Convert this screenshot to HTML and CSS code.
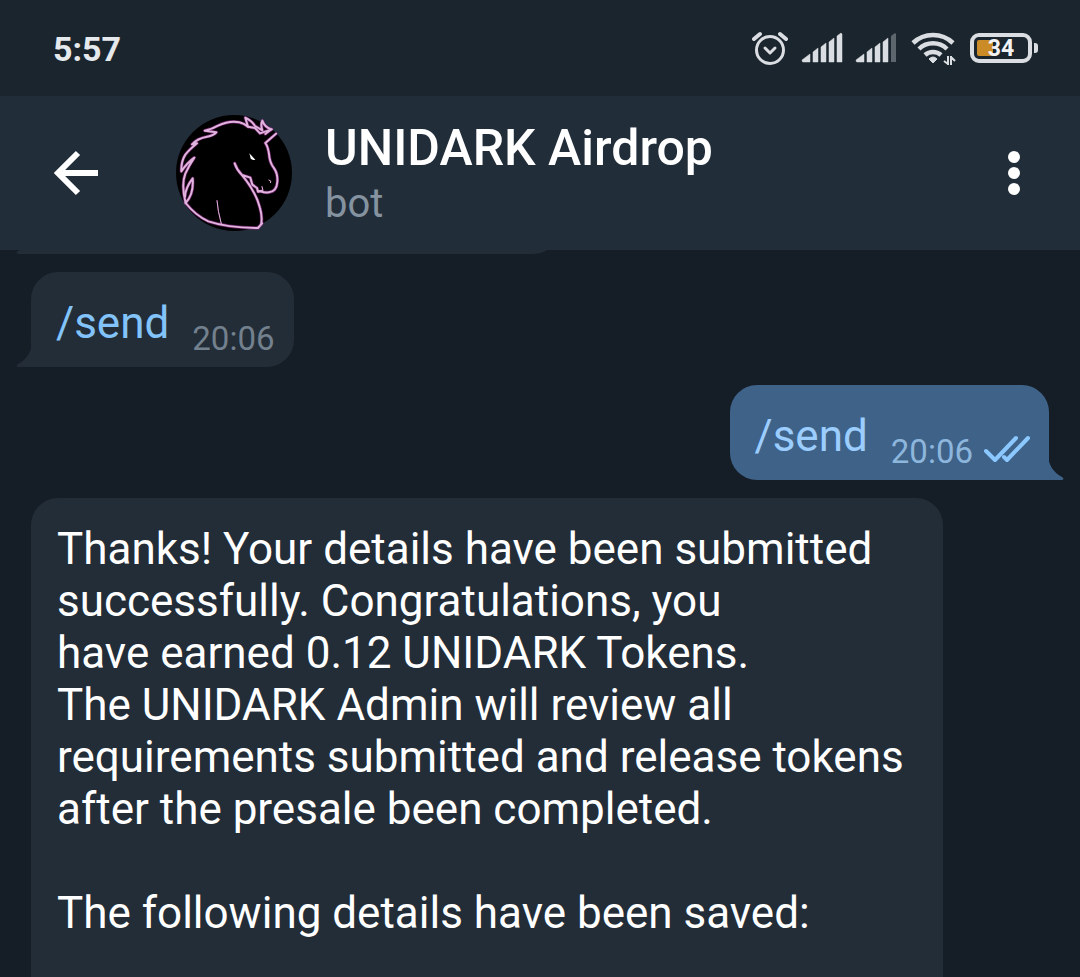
FILE: index.html
```html
<!DOCTYPE html>
<html lang="en">
<head>
    <meta charset="utf-8">
    <meta name="viewport" content="width=device-width, initial-scale=1">
    <title>UNIDARK Airdrop</title>
    <link rel="stylesheet" href="styles.css">
</head>
<body>
<div class="app">
    <div class="status-bar">
        <span class="clock">5:57</span>
        <div class="status-icons">
            <!-- alarm -->
            <svg width="36" height="36" viewBox="0 0 36 36" fill="none" stroke="currentColor" stroke-linecap="round">
                <circle cx="18" cy="20" r="13.500" stroke-width="3"/>
                <path d="M2 9 8 4M28 4l6 5" stroke-width="4"/>
                <path d="m13 18 5 5 5-5" stroke-width="3" stroke-linejoin="round"/>
            </svg>
            <!-- signal sim 1 -->
            <svg width="40" height="36" viewBox="0 0 40 36" fill="currentColor">
                <path d="M0 30l8-6v8H1q-1 0-1-2zM11 22l5-4v14h-5zM19 17l5-4v19h-5zM27 12l5-4v24h-5zM35 6l4-3 1 1v28h-5z" stroke="currentColor" stroke-width=".5"/>
            </svg>
            <!-- signal sim 2 -->
            <svg width="40" height="36" viewBox="0 0 40 36" fill="currentColor">
                <path d="M0 30l8-6v8H1q-1 0-1-2zM11 22l5-4v14h-5zM19 17l5-4v19h-5zM27 12l5-4v24h-5z" stroke="currentColor" stroke-width=".5"/>
                <path d="M35 6l4-3 1 1v28h-5z" opacity=".35"/>
            </svg>
            <!-- wifi -->
            <svg width="46" height="36" viewBox="0 0 46 36" fill="none" stroke="currentColor">
                <path d="M3 13a29 29 0 0 1 40 0M9 19a20 20 0 0 1 28 0M15 25a12 12 0 0 1 16 0" stroke-width="4.500"/>
                <path d="m23 33-4-4q4-4 8 0z" fill="currentColor" stroke-width="1" stroke-linejoin="round"/>
                <path d="M38 26v9M34 31l4 3M41 35v-9M41 27l4 4" stroke-width="2"/>
            </svg>
            <div class="battery">
                <div class="battery-body"><span class="battery-level"></span><span class="battery-text">34</span></div>
                <span class="battery-tip"></span>
            </div>
        </div>
    </div>

    <header class="header">
        <button class="btn back" type="button" aria-label="Back">
            <svg width="44" height="44" viewBox="0 0 44 44" fill="none" stroke="currentColor" stroke-width="6">
                <path d="M44 22H5M24 2 4 22l20 20"/>
            </svg>
        </button>
        <svg class="avatar" viewBox="18 21 348 348" fill="none" stroke-linejoin="round" stroke-linecap="round">
            <circle cx="192" cy="195" r="174" fill="#000"/>
            <defs>
                <g id="unicorn">
                    <path d="M47 286Q33 230 46 197Q58 171 73 149Q53 163 34 190Q33 160 46 140Q58 125 81 106L66 109Q82 91 111 86Q132 82 139 73L104 68Q128 63 144 53Q178 37 208 43Q222 46 234 56L226 29Q246 39 255 54L277 67Q271 50 277 38Q283 57 304 64L286 78"/>
                    <path d="M234 56 255 60 270 76 296 67 305 64M318 77 286 105M286 105Q294 116 297 138Q299 164 311 179Q324 197 322 222Q320 250 297 253Q282 255 274 250"/>
                    <path d="M274 250 264 251 261 240 247 230 241 209 216 201Q200 185 194 166M216 201Q258 252 270 300Q277 324 274 346"/>
                    <path d="M47 285Q76 322 115 340Q172 359 264 360L276 346M47 285Q72 259 68 211Q46 240 45 266"/>
                    <path d="M141 278Q143 307 154 348M266 248 279 248 276 236M297 216q9 3 5 8" stroke-width="3"/>
                </g>
            </defs>
            <use href="#unicorn" stroke="#8a2a86" stroke-width="10" opacity=".7"/>
            <use href="#unicorn" stroke="#e0b4dc" stroke-width="6"/>
            <path d="M238 136 256 155Q246 158 242 151Z" fill="#fff"/>
        </svg>
        <div class="title">
            <h1 class="name">UNIDARK Airdrop</h1>
            <div class="desc">bot</div>
        </div>
        <button class="btn menu" type="button" aria-label="More options">
            <svg width="12" height="44" viewBox="0 0 12 44" fill="currentColor">
                <circle cx="6" cy="6" r="6"/>
                <circle cx="6" cy="22" r="6"/>
                <circle cx="6" cy="38" r="6"/>
            </svg>
        </button>
    </header>

    <main class="chat">
        <!-- end of the previous message, scrolled under the header -->
        <div class="message in previous">
            <svg class="tail" viewBox="0 0 16 26"><path d="M16 0C16 11 10 19 2 23Q-1 25 2 26H16Z"/></svg>
        </div>
        <div class="message in short">
            <a class="command" href="#send">/send</a>
            <span class="time">20:06</span>
            <svg class="tail" viewBox="0 0 16 26"><path d="M16 0C16 11 10 19 2 23Q-1 25 2 26H16Z"/></svg>
        </div>
        <div class="message out short">
            <a class="command" href="#send">/send</a>
            <span class="time">20:06</span>
            <svg class="checks" width="46" height="28" viewBox="0 0 46 28" fill="none" stroke="currentColor" stroke-width="4" stroke-linecap="round" stroke-linejoin="round">
                <path d="m2 15 9 9L32 2M20 21l3 3L44 2"/>
            </svg>
            <svg class="tail" viewBox="0 0 16 26"><path d="M0 0C0 11 6 19 14 23Q17 25 14 26H0Z"/></svg>
        </div>
        <div class="message in long">
            <p>Thanks! Your details have been submitted<br>
                successfully. Congratulations, you<br>
                have earned 0.12 UNIDARK Tokens.<br>
                The UNIDARK Admin will review all<br>
                requirements submitted and release tokens<br>
                after the presale been completed.</p>
            <p>The following details have been saved:</p>
        </div>
    </main>
</div>
</body>
</html>
```
FILE: styles.css
```css
* {
    box-sizing: border-box;
}

body {
    margin: 0;
    font-family: Roboto, "Noto Sans", sans-serif;
    color: #fff;
    --bgColor: #151d26;
    --inColor: #222d38;
    --outColor: #3f6289;
}

svg {
    display: block;
    flex: none;
    overflow: visible;
}

.app {
    display: flex;
    flex-direction: column;
    height: 100vh;
    overflow: hidden;
    background: var(--bgColor);
}

.status-bar {
    display: flex;
    align-items: center;
    justify-content: space-between;
    flex: none;
    height: 96px;
    padding: 0 42px 0 53px;
    color: #dadde1;
    background: #1b252e;
}

.clock {
    padding-top: 2px;
    font-size: 34px;
    font-weight: 700;
    line-height: 40px;
    color: #e6e9ec;
}

.status-icons {
    display: flex;
    align-items: center;
    gap: 14px;
}

.battery {
    display: flex;
    align-items: center;
    gap: 2px;
}

.battery-body {
    position: relative;
    width: 62px;
    height: 30px;
    border: 4px solid currentColor;
    border-radius: 9px;
    text-align: center;
}

.battery-level {
    position: absolute;
    top: 3px;
    left: 3px;
    width: 16px;
    height: 16px;
    border-radius: 2px;
    background: #cb8c27;
}

.battery-text {
    position: relative;
    display: block;
    font-size: 23px;
    font-weight: 700;
    line-height: 24px;
    color: #f2f3f5;
}

.battery-tip {
    width: 4px;
    height: 10px;
    border-radius: 0 3px 3px 0;
    background: currentColor;
}

.header {
    display: flex;
    align-items: center;
    flex: none;
    height: 154px;
    padding: 0 60px 0 54px;
    background: #222d3a;
}

.btn {
    flex: none;
    padding: 0;
    border: 0;
    color: #fff;
    background: none;
    cursor: pointer;
}

.avatar {
    width: 116px;
    height: 116px;
    margin: 0 33px 0 78px;
}

.title {
    flex: 1;
}

.name {
    margin: 0;
    font-size: 50px;
    font-weight: 500;
    line-height: 60px;
}

.desc {
    margin-top: 2px;
    font-size: 40px;
    line-height: 48px;
    color: #8593a0;
}

.chat {
    display: flex;
    flex-direction: column;
    flex: 1;
    gap: 18px;
    min-height: 0;
    padding: 0 31px;
    overflow: hidden;
}

.message {
    position: relative;
    border-radius: 27px;
    font-size: 44px;
    line-height: 52px;
}

.in {
    align-self: flex-start;
    background: var(--inColor);
    fill: var(--inColor);
}

.out {
    align-self: flex-end;
    background: var(--outColor);
    fill: var(--outColor);
}

.previous {
    flex: none;
    width: 52%;
    height: 96px;
    margin-top: -92px;
    border-bottom-left-radius: 0;
}

.short {
    display: flex;
    align-items: flex-end;
    flex: none;
    padding: 25px 19px 8px 25px;
}

.short.in {
    border-bottom-left-radius: 0;
}

.short.out {
    border-bottom-right-radius: 0;
}

.tail {
    position: absolute;
    bottom: 0;
    width: 16px;
    height: 26px;
}

.in .tail {
    right: 100%;
    margin-right: -1px;
}

.out .tail {
    left: 100%;
    margin-left: -1px;
}

.command {
    margin: 0 23px 10px 0;
    color: #82c3fa;
    text-decoration: none;
}

.time {
    font-size: 33px;
    line-height: 40px;
    color: #73808d;
}

.out .command {
    color: #9bcdff;
}

.out .time {
    color: #8db6dd;
}

.checks {
    margin: 0 0 8px 11px;
    color: #8bc8ff;
}

/* runs on past the bottom of the window */
.long {
    flex: 1 0 auto;
    padding: 25px 39px 0 26px;
    border-radius: 27px 27px 0 0;
}

.long p {
    margin: 0 0 52px;
}
```
